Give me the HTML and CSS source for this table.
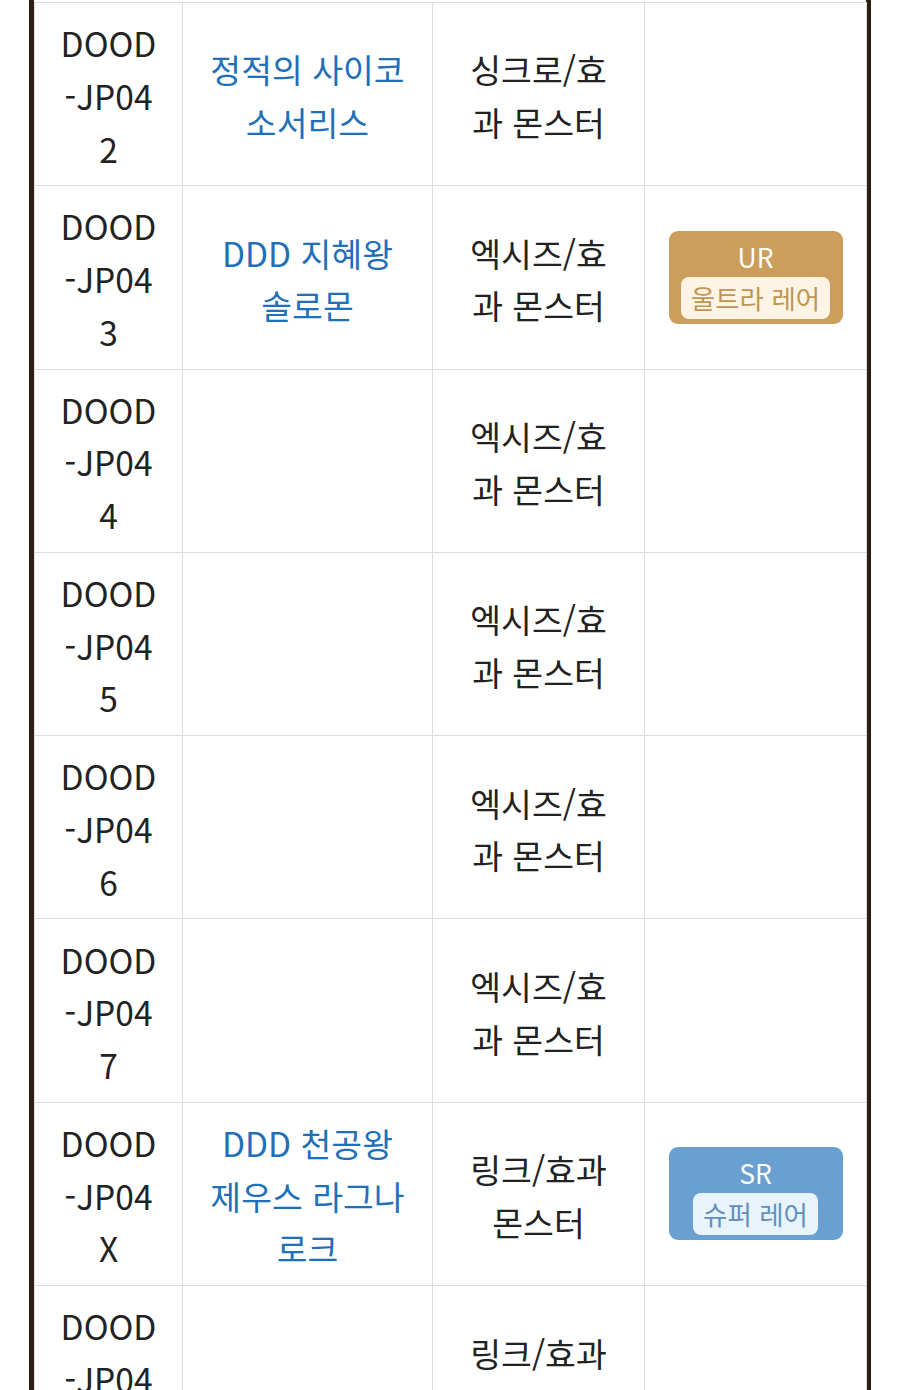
FILE: index.html
```html
<!DOCTYPE html>
<html lang="ko">
<head>
<meta charset="utf-8">
<title>DOOD 카드 리스트</title>
<link rel="stylesheet" href="styles.css">
</head>
<body>
<div class="wrap">
  <table class="cards">
    <colgroup>
      <col class="c1"><col class="c2"><col class="c3"><col class="c4">
    </colgroup>
    <tbody>
      <tr>
        <td class="code">DOOD-JP042</td>
        <td class="name"><a href="#">정적의 사이코 소서리스</a></td>
        <td class="type">싱크로/효과 몬스터</td>
        <td class="rarity"></td>
      </tr>
      <tr>
        <td class="code">DOOD-JP043</td>
        <td class="name"><a href="#">DDD 지혜왕 솔로몬</a></td>
        <td class="type">엑시즈/효과 몬스터</td>
        <td class="rarity"><div class="badge ur"><div class="badge-code">UR</div><span class="badge-name">울트라 레어</span></div></td>
      </tr>
      <tr>
        <td class="code">DOOD-JP044</td>
        <td class="name"></td>
        <td class="type">엑시즈/효과 몬스터</td>
        <td class="rarity"></td>
      </tr>
      <tr>
        <td class="code">DOOD-JP045</td>
        <td class="name"></td>
        <td class="type">엑시즈/효과 몬스터</td>
        <td class="rarity"></td>
      </tr>
      <tr>
        <td class="code">DOOD-JP046</td>
        <td class="name"></td>
        <td class="type">엑시즈/효과 몬스터</td>
        <td class="rarity"></td>
      </tr>
      <tr>
        <td class="code">DOOD-JP047</td>
        <td class="name"></td>
        <td class="type">엑시즈/효과 몬스터</td>
        <td class="rarity"></td>
      </tr>
      <tr>
        <td class="code">DOOD-JP04X</td>
        <td class="name"><a href="#">DDD 천공왕 제우스 라그나로크</a></td>
        <td class="type">링크/효과 몬스터</td>
        <td class="rarity"><div class="badge sr"><div class="badge-code">SR</div><span class="badge-name">슈퍼 레어</span></div></td>
      </tr>
      <tr>
        <td class="code">DOOD-JP049</td>
        <td class="name"></td>
        <td class="type">링크/효과 몬스터</td>
        <td class="rarity"></td>
      </tr>
    </tbody>
  </table>
</div>
</body>
</html>
```

FILE: styles.css
```css
html, body {
  margin: 0;
  padding: 0;
  background: #ffffff;
}

body {
  font-family: "Noto Sans CJK KR", "Noto Sans", sans-serif;
  color: #222222;
}

.wrap {
  margin-left: 29px;
  width: 832px;
  border-left: 5px solid #2a2112;
  border-right: 5px solid #2a2112;
  padding-top: 2px;
  min-height: 1500px;
}

.cards {
  width: 832px;
  border-collapse: collapse;
  table-layout: fixed;
  font-size: 33.5px;
  line-height: 52.7px;
}

.c1 { width: 148px; }
.c2 { width: 250px; }
.c3 { width: 212px; }
.c4 { width: 222px; }

.cards td {
  border: 1px solid #dddddd;
  padding: 14.1px 24px 10.1px;
  text-align: center;
  vertical-align: middle;
}

.cards .code {
  line-break: anywhere;
  overflow-wrap: anywhere;
}

.cards .rarity {
  padding: 12.1px 23.5px;
}

.cards a {
  color: #1f70b8;
  text-decoration: none;
}

.badge {
  border-radius: 9px;
  padding: 6px 0 5px;
  text-align: center;
  line-height: 1;
}

.badge-code {
  font-size: 26.5px;
  line-height: 40px;
  color: #ffffff;
}

.badge-name {
  display: inline-block;
  font-size: 26.5px;
  line-height: 42px;
  padding: 0 10px;
  border-radius: 8px;
}

.ur { background: #cb9e5c; }
.ur .badge-name { background: #fdf4e4; color: #c19552; }

.sr { background: #6aa0cf; }
.sr .badge-name { background: #e9f3fb; color: #5f90bf; }
```
